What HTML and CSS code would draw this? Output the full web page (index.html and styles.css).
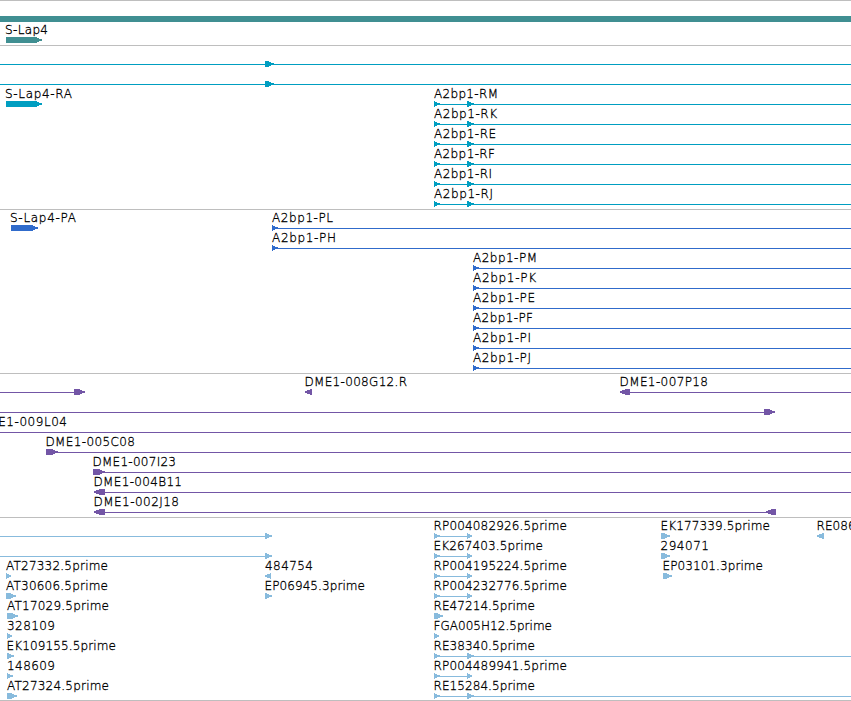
FILE: index.html
```html
<!DOCTYPE html>
<html lang="en">
  <head>
    <meta charset="utf-8">
    <title>A2bp1 region</title>
    <link rel="stylesheet" href="styles.css">
  </head>
  <body>
    <main class="browser">
      <section class="track span" id="span"></section>
      <section class="track mrna" id="mrna"></section>
      <section class="track cds" id="cds"></section>
      <section class="track bac" id="bac"></section>
      <section class="track est" id="est"></section>
    </main>
    <script src="tracks.js"></script>
  </body>
</html>
```
FILE: styles.css
```css
body {
  margin: 0;
  background: #fff;
}

.browser {
  width: 851px;
  height: 701px;
  overflow: hidden;
  border-bottom: 1px solid #bebebe;
  box-sizing: border-box;
}

.track {
  border-top: 1px solid #bebebe;
  padding: 1px 0;
}

.track svg {
  display: block;
  width: 100%;
  overflow: visible;
}

.track text {
  font-family: "DejaVu Sans", sans-serif;
  font-size: 12px;
  font-weight: 200;
  fill: #000;
  stroke: #000;
  stroke-width: 0.3px;
}

.track rect,
.track polygon {
  fill: currentColor;
  shape-rendering: crispEdges;
}

.span {
  color: #408f92;
  padding-bottom: 2px;
}

.mrna {
  color: #009ec1;
}

.cds {
  color: #306bcb;
}

.bac {
  color: #7356a6;
}

.est {
  color: #88bbdd;
  padding-bottom: 0;
}
```
FILE: tracks.js
```js
const WIDTH = 851;
const ROW = 20;

// label: [text, x, length], line: [from, to], arrows: [from, to], left: [from, to]
const tracks = {
  span: [
    [{ bar: [0, 851] }],
    [{ label: ['S-Lap4', 5, 43], arrows: [[6, 42]], shift: 1 }]
  ],
  mrna: [
    [{ line: [0, 851], arrows: [[265, 274]] }],
    [{ line: [0, 851], arrows: [[265, 274]] }],
    [
      { label: ['S-Lap4-RA', 5, 67], arrows: [[6, 42]] },
      { label: ['A2bp1-RM', 434, 64], line: [434, 851], arrows: [[434, 440], [467, 474]] }
    ],
    [{ label: ['A2bp1-RK', 434, 63], line: [434, 851], arrows: [[434, 440], [467, 474]] }],
    [{ label: ['A2bp1-RE', 434, 62], line: [434, 851], arrows: [[434, 440], [467, 474]] }],
    [{ label: ['A2bp1-RF', 434, 61], line: [434, 851], arrows: [[434, 440], [467, 474]] }],
    [{ label: ['A2bp1-RI', 434, 58], line: [434, 851], arrows: [[434, 440], [467, 474]] }],
    [{ label: ['A2bp1-RJ', 434, 59], line: [434, 851], arrows: [[434, 440], [467, 474]] }]
  ],
  cds: [
    [
      { label: ['S-Lap4-PA', 10, 66], arrows: [[11, 38]] },
      { label: ['A2bp1-PL', 272, 61], line: [272, 851], arrows: [[272, 278]] }
    ],
    [{ label: ['A2bp1-PH', 272, 64], line: [272, 851], arrows: [[272, 278]] }],
    [{ label: ['A2bp1-PM', 473, 64], line: [473, 851], arrows: [[473, 479]] }],
    [{ label: ['A2bp1-PK', 473, 63], line: [473, 851], arrows: [[473, 479]] }],
    [{ label: ['A2bp1-PE', 473, 62], line: [473, 851], arrows: [[473, 479]] }],
    [{ label: ['A2bp1-PF', 473, 60], line: [473, 851], arrows: [[473, 479]] }],
    [{ label: ['A2bp1-PI', 473, 58], line: [473, 851], arrows: [[473, 479]] }],
    [{ label: ['A2bp1-PJ', 473, 58], line: [473, 851], arrows: [[473, 479]] }]
  ],
  bac: [
    [
      { line: [0, 84], arrows: [[74, 85]] },
      { label: ['DME1-008G12.R', 304.5, 102.5], left: [[305, 312]] },
      { label: ['DME1-007P18', 619.5, 88.5], line: [620, 851], left: [[620, 630]] }
    ],
    [{ line: [0, 775], arrows: [[764, 775]] }],
    [{ label: ['DME1-009L04', -22.5, 89.5], line: [0, 851] }],
    [{ label: ['DME1-005C08', 45.5, 89.5], line: [46, 851], arrows: [[46, 58]] }],
    [{ label: ['DME1-007I23', 92.5, 83.5], line: [93, 851], arrows: [[93, 105]] }],
    [{ label: ['DME1-004B11', 93.5, 88.5], line: [94, 851], left: [[94, 105]] }],
    [{ label: ['DME1-002J18', 93.5, 85.5], line: [94, 776], left: [[94, 105], [766, 776]] }]
  ],
  est: [
    [
      { line: [0, 272], arrows: [[265, 272]] },
      { label: ['RP004082926.5prime', 433.5, 133.5], line: [434, 471], arrows: [[434, 440], [467, 472]] },
      { label: ['EK177339.5prime', 660.5, 109.5], arrows: [[661, 670]] },
      { label: ['RE08693.5prime', 816.5, 101.5], left: [[817, 824]] }
    ],
    [
      { line: [0, 272], arrows: [[265, 272]] },
      { label: ['EK267403.5prime', 433.5, 109.5], line: [434, 471], arrows: [[434, 440], [467, 472]] },
      { label: ['294071', 660.5, 48.5], arrows: [[661, 670]] }
    ],
    [
      { label: ['AT27332.5prime', 6, 102], arrows: [[6, 11]] },
      { label: ['484754', 265, 48], left: [[265, 271]] },
      { label: ['RP004195224.5prime', 433.5, 133.5], line: [434, 471], arrows: [[434, 440], [467, 472]] },
      { label: ['EP03101.3prime', 662.5, 100.5], arrows: [[663, 672]] }
    ],
    [
      { label: ['AT30606.5prime', 6, 102], arrows: [[6, 16]] },
      { label: ['EP06945.3prime', 264.5, 100.5], arrows: [[265, 272]] },
      { label: ['RP004232776.5prime', 433.5, 133.5], line: [434, 471], arrows: [[434, 440], [467, 472]] }
    ],
    [
      { label: ['AT17029.5prime', 7, 102], arrows: [[7, 18]] },
      { label: ['RE47214.5prime', 433.5, 101.5], arrows: [[434, 443]] }
    ],
    [
      { label: ['328109', 7, 48], arrows: [[7, 12]] },
      { label: ['FGA005H12.5prime', 433.5, 118.5], arrows: [[434, 439]] }
    ],
    [
      { label: ['EK109155.5prime', 6.5, 109.5], arrows: [[7, 14]] },
      { label: ['RE38340.5prime', 433.5, 101.5], line: [434, 851], arrows: [[434, 440], [467, 474]] }
    ],
    [
      { label: ['148609', 7, 48], arrows: [[7, 13]] },
      { label: ['RP004489941.5prime', 433.5, 133.5], line: [434, 471], arrows: [[434, 440], [467, 472]] }
    ],
    [
      { label: ['AT27324.5prime', 7, 102], arrows: [[7, 17]] },
      { label: ['RE15284.5prime', 433.5, 101.5], line: [434, 851], arrows: [[434, 440], [467, 474]] }
    ]
  ]
};

function arrow(from, to, y, left) {
  const head = Math.min(6, to - from);
  const points = left
    ? [[to, y], [to, y + 6], [from + head, y + 6], [from - 1, y + 3], [from + head, y]]
    : [[from, y], [to - head, y], [to + 1, y + 3], [to - head, y + 6], [from, y + 6]];
  return `<polygon points="${points.join(' ')}"/>`;
}

function feature(item, row) {
  const top = row * ROW + (item.shift || 0);
  let out = '';
  if (item.bar) {
    out += `<rect x="${item.bar[0]}" y="${top + 14}" width="${item.bar[1] - item.bar[0]}" height="6"/>`;
  }
  if (item.line) {
    out += `<rect x="${item.line[0]}" y="${top + 17}" width="${item.line[1] - item.line[0]}" height="1"/>`;
  }
  (item.arrows || []).forEach(([from, to]) => { out += arrow(from, to, top + 14, false); });
  (item.left || []).forEach(([from, to]) => { out += arrow(from, to, top + 14, true); });
  if (item.label) {
    const [text, x, length] = item.label;
    out += `<text x="${x}" y="${top + 11}" textLength="${length}">${text}</text>`;
  }
  return out;
}

Object.keys(tracks).forEach((name) => {
  const rows = tracks[name];
  const height = rows.length * ROW + 1;
  const body = rows.map((items, row) => items.map((item) => feature(item, row)).join('')).join('');
  document.getElementById(name).innerHTML =
    `<svg viewBox="0 0 ${WIDTH} ${height}" height="${height}">${body}</svg>`;
});
```
